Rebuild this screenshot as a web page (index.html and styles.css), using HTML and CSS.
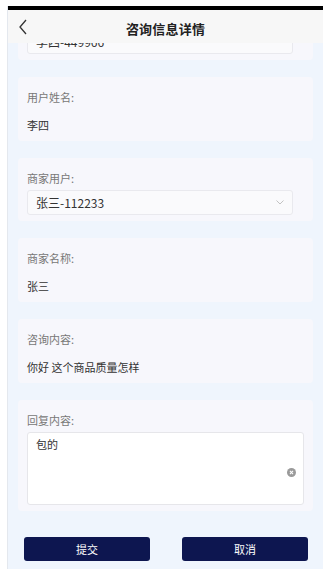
FILE: index.html
```html
<!DOCTYPE html>
<html lang="zh">
<head>
<meta charset="utf-8">
<title>咨询信息详情</title>
<link rel="stylesheet" href="styles.css">
</head>
<body>
<div class="frame">
  <div class="status"></div>
  <header class="nav">
    <svg class="back" width="10" height="16" viewBox="0 0 10 16"><polyline points="8,1 2,8 8,15" fill="none" stroke="#333" stroke-width="1.3"/></svg>
    <h1 class="title">咨询信息详情</h1>
  </header>
  <main class="scroll">
    <div class="content">
      <section class="card first">
        <div class="select"><span>李四-449966</span><svg class="chev" width="8" height="5" viewBox="0 0 8 5"><polyline points="0.5,0.5 4,4 7.5,0.5" fill="none" stroke="#bbb" stroke-width="0.9"/></svg></div>
      </section>
      <section class="card">
        <div class="label">用户姓名:</div>
        <div class="value">李四</div>
      </section>
      <section class="card">
        <div class="label">商家用户:</div>
        <div class="select"><span>张三-112233</span><svg class="chev" width="8" height="5" viewBox="0 0 8 5"><polyline points="0.5,0.5 4,4 7.5,0.5" fill="none" stroke="#bbb" stroke-width="0.9"/></svg></div>
      </section>
      <section class="card">
        <div class="label">商家名称:</div>
        <div class="value">张三</div>
      </section>
      <section class="card">
        <div class="label">咨询内容:</div>
        <div class="value">你好 这个商品质量怎样</div>
      </section>
      <section class="card">
        <div class="label">回复内容:</div>
        <div class="textarea">
          <span class="ta-text">包的</span>
          <span class="clear"><svg width="9" height="9" viewBox="0 0 8 8"><circle cx="4" cy="4" r="4" fill="#9a9a9a"/><path d="M2.6 2.6 L5.4 5.4 M5.4 2.6 L2.6 5.4" stroke="#fff" stroke-width="0.9"/></svg></span>
        </div>
      </section>
      <div class="actions">
        <button class="btn">提交</button>
        <button class="btn">取消</button>
      </div>
    </div>
  </main>
</div>
</body>
</html>
```
FILE: styles.css
```css
* { box-sizing: border-box; }
html, body { margin: 0; padding: 0; background: #fff; }
body {
  font-family: "Noto Sans CJK SC", "Noto Sans", sans-serif;
  color: #333;
}
.frame {
  margin: 6px 0 0 7px;
  width: 316px;
  height: 563px;
  background: #eff5fd;
  border-left: 1px solid #e4e8ee;
  display: flex;
  flex-direction: column;
  overflow: hidden;
}
.status { height: 4px; background: #000; flex: none; }
.nav {
  flex: none;
  height: 33px;
  background: #f7f7f7;
  display: flex;
  align-items: center;
  justify-content: center;
  position: relative;
  z-index: 2;
}
.back { position: absolute; left: 10px; top: 9px; }
.title {
  margin: 4px 0 0 0;
  font-size: 13px;
  font-weight: 700;
  color: #222;
  letter-spacing: 0.2px;
}
.scroll { flex: 1; overflow: hidden; }
.content {
  margin-top: -26px;
  padding: 0 10px 0 10px;
  display: flex;
  flex-direction: column;
  gap: 17px;
}
.card {
  background: #f7f7fc;
  border-radius: 4px;
  padding: 12px 9px 8px 9px;
  display: flex;
  flex-direction: column;
}
.label {
  font-size: 11px;
  line-height: 16px;
  color: #777;
}
.value {
  margin-top: 12px;
  font-size: 11px;
  line-height: 16px;
  color: #333;
}
.select {
  margin: 4px 11px 0 0;
  height: 25px;
  background: #fafafc;
  border: 1px solid #e9e9ee;
  border-radius: 3px;
  display: flex;
  align-items: center;
  justify-content: space-between;
  padding: 0 8px 0 8px;
  font-size: 12px;
  color: #333;
}
.card.first .select { margin-top: 0; }
.card:has(.select) { padding-bottom: 6px; }
.card:has(.textarea) { padding-bottom: 6px; }
.textarea {
  margin-top: 4px;
  height: 73px;
  background: #fff;
  border: 1px solid #e6e6ea;
  border-radius: 3px;
  padding: 3px 7px 3px 8px;
  display: flex;
  justify-content: space-between;
  align-items: flex-start;
  font-size: 11px;
  line-height: 16px;
  color: #333;
}
.clear { margin-top: 32px; display: flex; }
.actions {
  margin-top: 9px;
  display: flex;
  justify-content: space-between;
  padding: 0 5px 0 6px;
}
.btn {
  width: 126px;
  height: 24px;
  border: none;
  border-radius: 3px;
  background: #0d1650;
  color: #fff;
  font-family: inherit;
  font-size: 11px;
  padding: 0;
}
```
